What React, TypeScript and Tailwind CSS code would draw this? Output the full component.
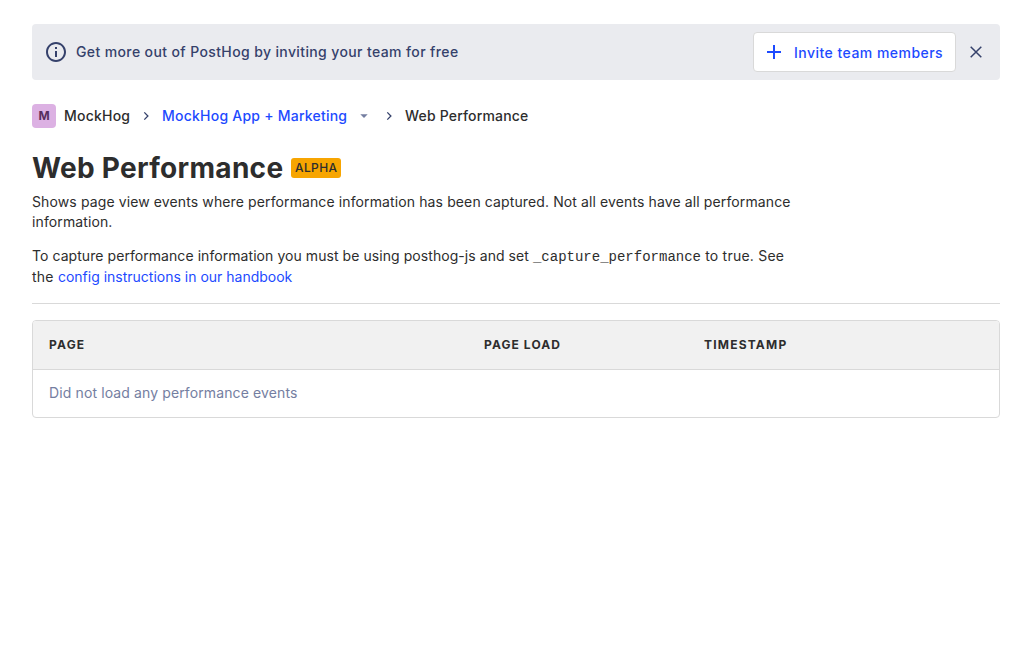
import React from 'react'

function InfoIcon() {
    return (
        <svg className="h-6 w-6 shrink-0" viewBox="0 0 24 24" fill="currentColor">
            <path d="M11 7h2v2h-2V7zm0 4h2v6h-2v-6zm1-9C6.480 2 2 6.480 2 12s4.480 10 10 10 10-4.480 10-10S17.520 2 12 2zm0 18c-4.410 0-8-3.590-8-8s3.590-8 8-8 8 3.590 8 8-3.590 8-8 8z" />
        </svg>
    )
}

function PlusIcon() {
    return (
        <svg className="h-6 w-6 shrink-0" viewBox="0 0 24 24" fill="currentColor">
            <path d="M19 13h-6v6h-2v-6H5v-2h6V5h2v6h6v2z" />
        </svg>
    )
}

function CloseIcon() {
    return (
        <svg className="h-4 w-4 shrink-0" viewBox="0 0 16 16" fill="none" stroke="currentColor" strokeWidth="1.5">
            <path d="M2.700 2.700 13.300 13.300M13.300 2.700 2.700 13.300" />
        </svg>
    )
}

function Chevron() {
    return (
        <svg className="h-4 w-4 shrink-0 text-[#35416b]" viewBox="0 0 16 16" fill="none" stroke="currentColor" strokeWidth="1.3">
            <path d="M6.300 4.400 9.900 8 6.300 11.600" />
        </svg>
    )
}

function Banner() {
    return (
        <div className="flex h-14 items-center rounded bg-[#eaebef] pr-4 pl-3 text-[#35416b]">
            <InfoIcon />
            <span className="ml-2 grow font-medium tracking-[0.38px]">
                Get more out of PostHog by inviting your team for free
            </span>
            <button className="flex h-10 w-[203px] items-center rounded border border-[#d9d9d9] bg-white pl-2 text-[#1d4aff]">
                <PlusIcon />
                <span className="mt-px ml-2 font-medium whitespace-nowrap tracking-[0.47px]">Invite team members</span>
            </button>
            <button className="ml-3 flex" aria-label="Close">
                <CloseIcon />
            </button>
        </div>
    )
}

function Breadcrumbs() {
    return (
        <nav className="mt-6 flex h-6 items-center font-medium whitespace-nowrap">
            <span className="flex h-6 w-6 items-center justify-center rounded bg-[#dcb1e3] text-[12px] font-bold text-[#572e5e]">
                M
            </span>
            <span className="ml-2 w-[66px] tracking-[0.22px]">MockHog</span>
            <span className="ml-2 flex"><Chevron /></span>
            <a className="ml-2 w-[186px] tracking-[0.23px] text-[#1d4aff]">MockHog App + Marketing</a>
            <svg className="ml-2 h-4 w-4 text-[#747ea1]" viewBox="0 0 16 16" fill="currentColor">
                <path d="M4.300 6.300h7.400L8 10z" />
            </svg>
            <span className="ml-[9px] flex"><Chevron /></span>
            <span className="ml-2 tracking-[0.18px]">Web Performance</span>
        </nav>
    )
}

export default function App() {
    return (
        <main className="min-h-screen bg-white px-8 pt-6 font-['Inter',sans-serif] text-[14px] leading-5 text-[#2d2d2d]">
            <Banner />
            <Breadcrumbs />
            <h1 className="mt-5 flex h-10 items-center text-[28px] leading-10 font-bold">
                <span className="w-[251px] whitespace-nowrap tracking-[0.3px]">Web Performance</span>
                <span className="ml-2 flex h-5 w-[50px] items-center justify-center rounded-[3px] bg-[#f7a501] pl-[0.4px] text-[12px] leading-5 font-medium tracking-[0.4px]">
                    ALPHA
                </span>
            </h1>
            <div className="mt-1 w-[768px]">
                <p className="tracking-[0.115px]">
                    Shows page view events where performance information has been captured. Not all events have all
                    performance information.
                </p>
                <p className="mt-3.5">
                    <span className="tracking-[0.062px]">
                        To capture performance information you must be using posthog-js and set{' '}
                    </span>
                    <code className="font-['Liberation_Mono',monospace] text-[14px]">_capture_performance</code>
                    <span className="tracking-[0.23px]"> to true. See the </span>
                    <a className="text-[#1d4aff]">config instructions in our handbook</a>
                </p>
            </div>
            <hr className="mt-4 border-[#d9d9d9]" />
            <section className="mt-4 overflow-hidden rounded border border-[#d9d9d9]">
                <div className="grid h-[49px] grid-cols-[435px_220px_1fr] items-center border-b border-[#d9d9d9] bg-[#f1f1f1] px-4 text-[12px] font-bold">
                    <span className="tracking-[1.2px]">PAGE</span>
                    <span className="tracking-[1.1px]">PAGE LOAD</span>
                    <span className="tracking-[1.2px]">TIMESTAMP</span>
                </div>
                <div className="flex h-[47px] items-center px-4 pb-0.5 tracking-[0.12px] text-[#747ea1]">
                    Did not load any performance events
                </div>
            </section>
        </main>
    )
}
